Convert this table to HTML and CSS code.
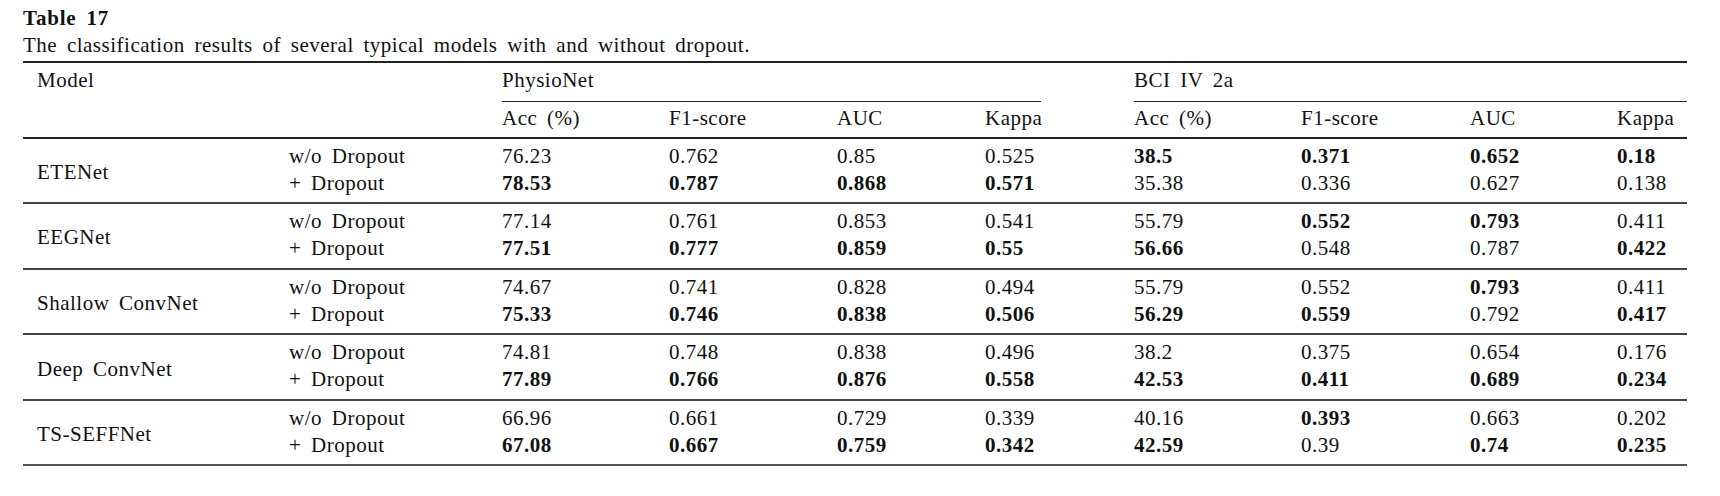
FILE: index.html
```html
<!DOCTYPE html>
<html lang="en">
<head>
<meta charset="utf-8">
<title>Table 17</title>
<link rel="stylesheet" href="styles.css">
</head>
<body>
<div class="wrap">
  <div class="title">Table 17</div>
  <div class="caption">The classification results of several typical models with and without dropout.</div>
  <table class="tbl">
    <colgroup>
      <col class="c-model"><col class="c-var">
      <col class="c-acc"><col class="c-f1"><col class="c-auc"><col class="c-kap">
      <col class="c-acc"><col class="c-f1b"><col class="c-aucb"><col class="c-last">
    </colgroup>
    <thead>
      <tr class="h1">
        <th class="model">Model</th>
        <th></th>
        <th colspan="4"><div class="grp grp-mid">PhysioNet</div></th>
        <th colspan="4"><div class="grp">BCI IV 2a</div></th>
      </tr>
      <tr class="h2">
        <th></th><th></th>
        <th>Acc (%)</th><th>F1-score</th><th>AUC</th><th>Kappa</th>
        <th>Acc (%)</th><th>F1-score</th><th>AUC</th><th>Kappa</th>
      </tr>
    </thead>
    <tbody class="first">
      <tr class="r1">
        <td class="model" rowspan="2">ETENet</td><td>w/o Dropout</td>
        <td>76.23</td><td>0.762</td><td>0.85</td><td>0.525</td>
        <td><b>38.5</b></td><td><b>0.371</b></td><td><b>0.652</b></td><td><b>0.18</b></td>
      </tr>
      <tr class="r2">
        <td>+ Dropout</td>
        <td><b>78.53</b></td><td><b>0.787</b></td><td><b>0.868</b></td><td><b>0.571</b></td>
        <td>35.38</td><td>0.336</td><td>0.627</td><td>0.138</td>
      </tr>
    </tbody>
    <tbody>
      <tr class="r1">
        <td class="model" rowspan="2">EEGNet</td><td>w/o Dropout</td>
        <td>77.14</td><td>0.761</td><td>0.853</td><td>0.541</td>
        <td>55.79</td><td><b>0.552</b></td><td><b>0.793</b></td><td>0.411</td>
      </tr>
      <tr class="r2">
        <td>+ Dropout</td>
        <td><b>77.51</b></td><td><b>0.777</b></td><td><b>0.859</b></td><td><b>0.55</b></td>
        <td><b>56.66</b></td><td>0.548</td><td>0.787</td><td><b>0.422</b></td>
      </tr>
    </tbody>
    <tbody>
      <tr class="r1">
        <td class="model" rowspan="2">Shallow ConvNet</td><td>w/o Dropout</td>
        <td>74.67</td><td>0.741</td><td>0.828</td><td>0.494</td>
        <td>55.79</td><td>0.552</td><td><b>0.793</b></td><td>0.411</td>
      </tr>
      <tr class="r2">
        <td>+ Dropout</td>
        <td><b>75.33</b></td><td><b>0.746</b></td><td><b>0.838</b></td><td><b>0.506</b></td>
        <td><b>56.29</b></td><td><b>0.559</b></td><td>0.792</td><td><b>0.417</b></td>
      </tr>
    </tbody>
    <tbody>
      <tr class="r1">
        <td class="model" rowspan="2">Deep ConvNet</td><td>w/o Dropout</td>
        <td>74.81</td><td>0.748</td><td>0.838</td><td>0.496</td>
        <td>38.2</td><td>0.375</td><td>0.654</td><td>0.176</td>
      </tr>
      <tr class="r2">
        <td>+ Dropout</td>
        <td><b>77.89</b></td><td><b>0.766</b></td><td><b>0.876</b></td><td><b>0.558</b></td>
        <td><b>42.53</b></td><td><b>0.411</b></td><td><b>0.689</b></td><td><b>0.234</b></td>
      </tr>
    </tbody>
    <tbody class="last">
      <tr class="r1">
        <td class="model" rowspan="2">TS-SEFFNet</td><td>w/o Dropout</td>
        <td>66.96</td><td>0.661</td><td>0.729</td><td>0.339</td>
        <td>40.16</td><td><b>0.393</b></td><td>0.663</td><td>0.202</td>
      </tr>
      <tr class="r2">
        <td>+ Dropout</td>
        <td><b>67.08</b></td><td><b>0.667</b></td><td><b>0.759</b></td><td><b>0.342</b></td>
        <td><b>42.59</b></td><td>0.39</td><td><b>0.74</b></td><td><b>0.235</b></td>
      </tr>
    </tbody>
  </table>
</div>
</body>
</html>
```

FILE: styles.css
```css
html, body {
  margin: 0;
  padding: 0;
  background: #ffffff;
}

body {
  font-family: "Liberation Serif", "Times New Roman", serif;
  font-size: 21px;
  line-height: 27px;
  color: #111111;
  letter-spacing: 0.5px;
  word-spacing: 4px;
}

.wrap {
  padding: 5px 0 0 23px;
}

.title {
  font-weight: bold;
  letter-spacing: 0.8px;
}

.caption {
  white-space: nowrap;
}

.tbl {
  margin-top: 2px;
  width: 1664px;
  table-layout: fixed;
  border-collapse: separate;
  border-spacing: 0;
  border-top: 2px solid #222222;
  border-bottom: 2px solid #555555;
}

.c-model { width: 266px; }
.c-var   { width: 213px; }
.c-acc   { width: 167px; }
.c-f1    { width: 168px; }
.c-auc   { width: 148px; }
.c-kap   { width: 149px; }
.c-f1b   { width: 169px; }
.c-aucb  { width: 147px; }
.c-last  { width: 70px; }

.tbl th,
.tbl td {
  padding: 0;
  text-align: left;
  font-weight: normal;
  white-space: nowrap;
  vertical-align: top;
}

.tbl b {
  font-weight: bold;
}

.tbl th.model,
.tbl td.model {
  padding-left: 14px;
}

.h1 th {
  padding-top: 3.5px;
  padding-bottom: 3px;
}

.grp {
  padding-bottom: 7px;
  border-bottom: 1px solid #222222;
}

.grp-mid {
  margin-right: 93px;
}

.h2 th {
  padding-bottom: 5.5px;
  border-bottom: 2px solid #222222;
}

.tbl td.model {
  vertical-align: middle;
}

tbody .r1 td {
  padding-top: 4px;
  border-top: 2px solid #444444;
}

tbody.first .r1 td {
  border-top: 0;
  padding-top: 3.5px;
}

tbody .r2 td {
  padding-bottom: 5.6px;
}
```
